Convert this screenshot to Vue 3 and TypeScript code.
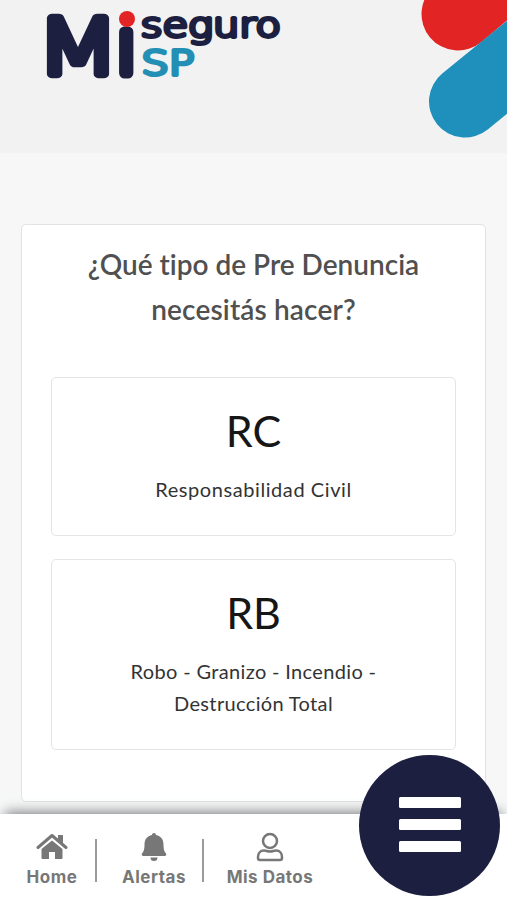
<script setup lang="ts">
interface Option {
  code: string
  lines: string[]
}

const options: Option[] = [
  { code: 'RC', lines: ['Responsabilidad Civil'] },
  { code: 'RB', lines: ['Robo - Granizo - Incendio -', 'Destrucción Total'] },
]
</script>

<template>
  <div class="screen">
    <header class="header">
      <svg class="logo" viewBox="0 0 300 100" role="img" aria-label="Mi seguro SP">
        <defs>
          <clipPath id="stem"><rect x="115" y="26" width="24" height="60" /></clipPath>
        </defs>
        <text class="mark wide" x="37" y="73.500" textLength="82" lengthAdjust="spacingAndGlyphs">M</text>
        <g clip-path="url(#stem)">
          <text class="mark" x="116.2" y="72.5">i</text>
        </g>
        <circle cx="127" cy="19" r="8" fill="#e32424" />
        <text class="word" x="140.800" y="36.800" textLength="140" lengthAdjust="spacingAndGlyphs">seguro</text>
        <text class="sp" x="141.500" y="75" textLength="53" lengthAdjust="spacingAndGlyphs">SP</text>
      </svg>
      <svg class="decor" viewBox="0 0 100 153" aria-hidden="true">
        <path d="M51 14 L100 -27" stroke="#e32424" stroke-width="73" stroke-linecap="round" />
        <path d="M58 101.500 L120 51" stroke="#1f8fbc" stroke-width="72" stroke-linecap="round" />
      </svg>
    </header>

    <main class="main">
      <section class="card">
        <h1 class="title">
          <span class="first">¿Qué tipo de Pre Denuncia</span>
          <span class="second">necesitás hacer?</span>
        </h1>
        <button v-for="o in options" :key="o.code" class="option" :class="{ single: o.lines.length === 1 }" type="button">
          <span class="code">{{ o.code }}</span>
          <span v-for="line in o.lines" :key="line" class="line">{{ line }}</span>
        </button>
      </section>
    </main>

    <nav class="nav">
      <a class="item home">
        <svg width="32" height="28" viewBox="0 0 32 28">
          <path d="M2 15.500 16 3.500 30 15.500" fill="none" stroke="#777" stroke-width="3" stroke-linecap="round" stroke-linejoin="round" />
          <path d="M22 3h5v10l-5-4zM16 8.500 26.500 17v9q0 1-1 1H19v-7h-6v7H6.500q-1 0-1-1v-9z" fill="#777" />
        </svg>
        <span>Home</span>
      </a>
      <i class="divider"></i>
      <a class="item alerts">
        <svg width="26" height="30" viewBox="0 0 26 30">
          <path d="M11 3a2 2 0 0 1 4 0c5 1 7.500 4.500 7.500 9.500 0 5 .8 7 2.200 8.500 1.200 1.300.5 3-1 3H2.300c-1.500 0-2.200-1.700-1-3 1.400-1.500 2.200-3.500 2.200-8.500C3.500 7.500 6 4 11 3zM9.500 25.500h7a3.500 3.500 0 0 1-7 0z" fill="#777" />
        </svg>
        <span>Alertas</span>
      </a>
      <i class="divider"></i>
      <a class="item profile">
        <svg width="28" height="30" viewBox="0 0 28 30" fill="none" stroke="#777" stroke-width="2.500">
          <circle cx="14" cy="9" r="7" />
          <path d="M8 18.500c2.500 0 3 1 6 1s3.500-1 6-1c4 0 6 3 6 6.500v1q0 2-2 2H4q-2 0-2-2v-1c0-3.500 2-6.500 6-6.500z" />
        </svg>
        <span>Mis Datos</span>
      </a>
    </nav>

    <button class="menu" type="button" aria-label="Menú">
      <i></i><i></i><i></i>
    </button>
  </div>
</template>

<style>
body {
  margin: 0;
}
</style>

<style scoped>
.screen {
  position: relative;
  display: flex;
  flex-direction: column;
  width: 507px;
  height: 900px;
  overflow: hidden;
  background: #f7f7f7;
  font-family: Lato, "Liberation Sans", sans-serif;
  font-variant-ligatures: none;
}
.header {
  display: flex;
  justify-content: space-between;
  height: 153px;
  flex: none;
  background: #f2f2f2;
}
.logo {
  width: 300px;
  height: 100px;
}
.decor {
  width: 100px;
  height: 153px;
  fill: none;
}
.mark,
.word,
.sp {
  font-family: "DejaVu Sans Light", "DejaVu Sans ExtraLight", "DejaVu Sans", sans-serif;
  font-weight: 200;
  stroke-linejoin: round;
}
.mark {
  font-size: 74px;
  fill: #1c1f40;
  stroke: #1c1f40;
  stroke-width: 11px;
}
.wide {
  font-size: 76px;
  stroke-width: 8.6px;
}
.word {
  font-size: 33px;
  fill: #1c1f40;
  stroke: #1c1f40;
  stroke-width: 3.8px;
}
.sp {
  font-size: 34px;
  fill: #238fb5;
  stroke: #238fb5;
  stroke-width: 4px;
}
.main {
  flex: 1;
  padding: 71px 21px 0;
}
.card {
  box-sizing: border-box;
  height: 578px;
  padding: 17px 29px 0;
  border: 1.5px solid #e2e2e2;
  border-radius: 5px;
  background: #fff;
}
.title {
  display: flex;
  flex-direction: column;
  margin: 0 0 45px;
  color: #505050;
  font-size: 28px;
  font-weight: 600;
  line-height: 45px;
  text-align: center;
}
.second {
  letter-spacing: 0.15px;
}
.option {
  display: flex;
  flex-direction: column;
  align-items: center;
  width: 100%;
  margin: 0 0 23px;
  padding: 20px 0 30px;
  border: 1.5px solid #e4e4e4;
  border-radius: 5px;
  background: #fff;
  color: #333;
  font-family: inherit;
  white-space: nowrap;
}
.code {
  margin-bottom: 9px;
  color: #161616;
  font-size: 43px;
  line-height: 66px;
}
.line {
  font-size: 20px;
  line-height: 32px;
  letter-spacing: 0.35px;
}
.single .line {
  letter-spacing: 0.58px;
}
.nav {
  position: relative;
  display: flex;
  align-items: flex-start;
  box-sizing: border-box;
  flex: none;
  height: 86px;
  padding-top: 18px;
  background: #fff;
  color: #777;
  font-family: Inter, sans-serif;
  font-size: 17px;
  font-weight: 700;
  line-height: 22px;
  letter-spacing: 0.5px;
  box-shadow: 0 -7px 12px -5px #7d8084;
}
.item {
  display: flex;
  flex-direction: column;
  align-items: center;
  justify-content: space-between;
  height: 56px;
  white-space: nowrap;
}
.home {
  width: 70px;
  margin-left: 17px;
}
.alerts {
  width: 70px;
  margin-left: 22px;
}
.profile {
  width: 90px;
  margin-left: 21px;
}
.divider {
  width: 2px;
  height: 43px;
  margin: 7px 0 0 8px;
  background: #9b9b9b;
}
.alerts + .divider {
  margin-left: 13px;
}
.menu {
  position: absolute;
  left: 359px;
  top: 755px;
  display: flex;
  flex-direction: column;
  align-items: center;
  justify-content: center;
  gap: 11px;
  width: 141px;
  height: 141px;
  padding: 0 0 3px;
  border: 0;
  border-radius: 50%;
  background: #1c1f40;
}
.menu i {
  width: 62px;
  height: 11px;
  border-radius: 1.5px;
  background: #fff;
}
</style>
